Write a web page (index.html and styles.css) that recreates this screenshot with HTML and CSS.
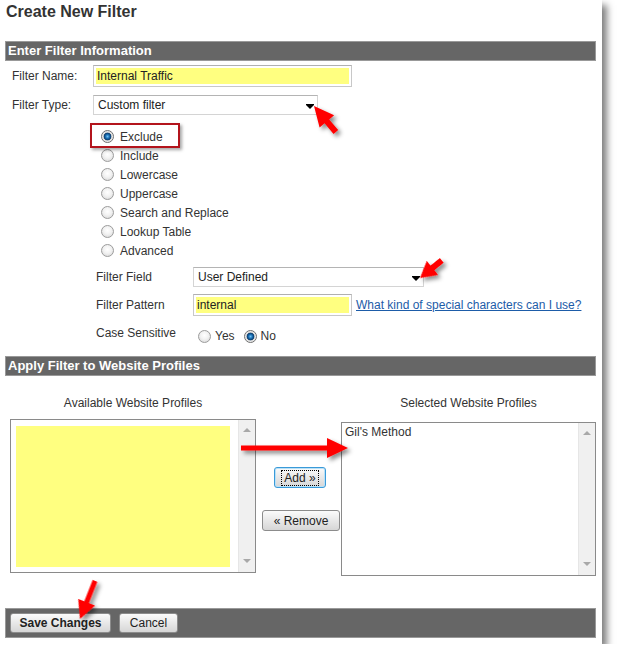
FILE: index.html
```html
<!DOCTYPE html>
<html lang="en">
<head>
    <meta charset="UTF-8">
    <title>Create New Filter</title>
    <link rel="stylesheet" href="styles.css">
</head>
<body>
    <div class="panel">
        <h1 class="page-title">Create New Filter</h1>

        <div class="section-bar">Enter Filter Information</div>
        <div class="form-row form-row--first">
            <label class="form-label" for="filter-name">Filter Name:</label>
            <input id="filter-name" class="text-field text-field--name" value="Internal Traffic">
        </div>
        <div class="form-row">
            <span class="form-label">Filter Type:</span>
            <div class="select-box select-box--type">Custom filter<span class="caret"></span></div>
        </div>

        <ul class="radio-list">
            <li class="radio-item radio-item--marked"><input class="radio" type="radio" name="ftype" checked>Exclude</li>
            <li class="radio-item"><input class="radio" type="radio" name="ftype">Include</li>
            <li class="radio-item"><input class="radio" type="radio" name="ftype">Lowercase</li>
            <li class="radio-item"><input class="radio" type="radio" name="ftype">Uppercase</li>
            <li class="radio-item"><input class="radio" type="radio" name="ftype">Search and Replace</li>
            <li class="radio-item"><input class="radio" type="radio" name="ftype">Lookup Table</li>
            <li class="radio-item"><input class="radio" type="radio" name="ftype">Advanced</li>
        </ul>

        <div class="sub-form">
            <div class="sub-row">
                <span class="sub-label">Filter Field</span>
                <div class="select-box select-box--field">User Defined<span class="caret"></span></div>
            </div>
            <div class="sub-row sub-row--pattern">
                <span class="sub-label">Filter Pattern</span>
                <input class="text-field text-field--pattern" value="internal">
                <a href="#" class="help-link">What kind of special characters can I use?</a>
            </div>
            <div class="sub-row sub-row--case">
                <span class="sub-label">Case Sensitive</span>
                <div class="case-options">
                    <label class="case-option"><input class="radio" type="radio" name="case">Yes</label>
                    <label class="case-option"><input class="radio" type="radio" name="case" checked>No</label>
                </div>
            </div>
        </div>

        <div class="section-bar section-bar--profiles">Apply Filter to Website Profiles</div>
        <div class="profiles">
            <div class="profile-col">
                <div class="col-caption">Available Website Profiles</div>
                <div class="listbox">
                    <div class="list-body"><div class="list-highlight"></div></div>
                    <div class="scrollbar"><span class="sb-up"></span><span class="sb-down"></span></div>
                </div>
            </div>
            <div class="profile-actions">
                <button class="btn btn--focused"><span class="focus-ring">Add &raquo;</span></button>
                <button class="btn btn--remove">&laquo; Remove</button>
            </div>
            <div class="profile-col profile-col--selected">
                <div class="col-caption">Selected Website Profiles</div>
                <div class="listbox">
                    <div class="list-body list-body--items">Gil's Method</div>
                    <div class="scrollbar"><span class="sb-up"></span><span class="sb-down"></span></div>
                </div>
            </div>
        </div>

        <div class="footer-bar">
            <button class="btn btn--save">Save Changes</button>
            <button class="btn btn--cancel">Cancel</button>
        </div>

        <!-- red callout arrows drawn over the form -->
        <svg class="callouts" width="602" height="644" viewBox="0 0 602 644">
            <defs>
                <filter id="arrow-shadow" x="-50%" y="-50%" width="200%" height="200%">
                    <feDropShadow dx="3" dy="3" stdDeviation="2" flood-color="#000" flood-opacity="0.45"/>
                </filter>
            </defs>
            <g fill="#ff0000" filter="url(#arrow-shadow)">
                <path transform="translate(314,106) rotate(-130)" d="M0,0 L-20,-9.5 L-20,-3 L-34,-3 L-34,3 L-20,3 L-20,9.5 Z"/>
                <path transform="translate(420,278) rotate(141)" d="M0,0 L-16,-9 L-16,-3 L-28,-3 L-28,3 L-16,3 L-16,9 Z"/>
                <path transform="translate(348,448)" d="M0,0 L-21,-10 L-21,-2.5 L-107,-2.5 L-107,2.5 L-21,2.5 L-21,10 Z"/>
                <path transform="translate(80,619) rotate(111.5)" d="M0,0 L-18,-9 L-18,-2.5 L-41,-2.5 L-41,2.5 L-18,2.5 L-18,9 Z"/>
            </g>
        </svg>
    </div>
</body>
</html>
```

FILE: styles.css
```css
body {
    margin: 0;
    background-color: #fff;
    font-family: "Liberation Sans", Arial, sans-serif;
    font-size: 12px;
    color: #333;
}
.panel {
    position: relative;
    width: 602px;
    height: 644px;
    box-sizing: border-box;
    padding: 0 6px 0 5px;
    background-color: #fff;
    box-shadow: 5px 5px 7px rgba(0, 0, 0, 0.5);
}
.page-title {
    margin: 0 0 19px;
    padding: 2px 0 0 1px;
    font-size: 16px;
    line-height: 20px;
    font-weight: bold;
    color: #333;
}
.section-bar {
    height: 20px;
    box-sizing: border-box;
    border: 1px solid #999;
    background-color: #666;
    color: #fff;
    font-size: 13px;
    font-weight: bold;
    line-height: 18px;
    padding-left: 2px;
}
.form-row {
    display: flex;
    align-items: center;
    margin-top: 8px;
    padding-left: 7px;
}
.form-row--first {
    margin-top: 4px;
}
.form-label {
    width: 81px;
    flex: none;
}
.text-field {
    height: 22px;
    box-sizing: border-box;
    border: 1px solid #c8c8c8;
    border-top-color: #b0b0b0;
    padding: 0 3px;
    margin: 0;
    background-color: #ffff80;
    box-shadow: inset 0 0 0 2px #fff;
    font-family: inherit;
    font-size: 12px;
    color: #222;
    outline: none;
}
.text-field--name {
    width: 259px;
}
.text-field--pattern {
    width: 159px;
}
.select-box {
    display: flex;
    align-items: center;
    justify-content: space-between;
    height: 20px;
    box-sizing: border-box;
    border: 1px solid #d4d4d4;
    border-top-color: #b4b4b4;
    padding: 0 3px 0 4px;
    background-color: #fff;
    color: #222;
}
.select-box--type {
    width: 225px;
}
.select-box--field {
    width: 231px;
}
.caret {
    width: 0;
    height: 0;
    border-left: 4px solid transparent;
    border-right: 4px solid transparent;
    border-top: 4px solid #000;
    margin-top: 3px;
    box-shadow: 0 -1px 0 0 #000;
}
.radio-list {
    list-style: none;
    margin: 12px 0 0 96px;
    padding: 0;
}
.radio-item {
    display: flex;
    align-items: center;
    gap: 6px;
    height: 19px;
}
.radio-item--marked {
    position: relative;
}
.radio-item--marked::before {
    content: "";
    position: absolute;
    left: -11px;
    top: -4px;
    width: 90px;
    height: 25px;
    box-sizing: border-box;
    border: 2px solid #b3141c;
    box-shadow: 2px 2px 3px rgba(0, 0, 0, 0.35);
}
.radio {
    appearance: none;
    -webkit-appearance: none;
    width: 13px;
    height: 13px;
    margin: 0;
    flex: none;
    box-sizing: border-box;
    border: 1px solid #9c9c9c;
    border-radius: 50%;
    background: radial-gradient(circle at 50% 40%, #fff 0, #f2f2f2 45%, #d2d2d2 100%);
}
.radio:checked {
    border-color: #6f6f6f;
    background: radial-gradient(circle, #6cc0f5 0, #1a6db0 2px, #0b3c6c 3.5px, #d8d8d8 4.2px, #fbfbfb 6px);
}
.sub-form {
    margin: 7px 0 0 91px;
}
.sub-row {
    display: flex;
    align-items: center;
    margin-top: 7px;
}
.sub-row:first-child {
    margin-top: 0;
}
.sub-label {
    width: 97px;
    flex: none;
}
.help-link {
    margin-left: 4px;
    color: #1d5ca8;
    text-decoration: underline;
}
.sub-row--case {
    align-items: flex-start;
    height: 18px;
    margin-top: 10px;
}
.sub-row--case .sub-label {
    line-height: 14px;
}
.case-options {
    display: flex;
    align-items: center;
    height: 18px;
    margin-left: 5px;
    padding-top: 1px;
}
.case-option {
    display: flex;
    align-items: center;
    gap: 4px;
    margin-right: 9px;
}
.section-bar--profiles {
    margin-top: 12px;
}
.profiles {
    display: grid;
    grid-template-columns: 246px 85px 255px;
    margin: 20px 0 0 5px;
}
.col-caption {
    text-align: center;
    line-height: 14px;
    margin-bottom: 9px;
}
.profile-col--selected .col-caption {
    margin-bottom: 12px;
}
.listbox {
    display: flex;
    height: 154px;
    box-sizing: border-box;
    border: 1px solid #8a8a8a;
    background-color: #fff;
}
.list-body {
    flex: 1;
    display: flex;
    padding: 6px 8px 5px 5px;
}
.list-highlight {
    flex: 1;
    background-color: #ffff80;
}
.list-body--items {
    display: block;
    padding: 2px 3px;
    color: #333;
    line-height: 15px;
}
.scrollbar {
    width: 16px;
    flex: none;
    display: flex;
    flex-direction: column;
    align-items: center;
    justify-content: space-between;
    padding: 8px 0 9px;
    background-color: #f0f0f0;
    border-left: 1px solid #e6e6e6;
}
.sb-up,
.sb-down {
    width: 0;
    height: 0;
    border-left: 4px solid transparent;
    border-right: 4px solid transparent;
}
.sb-up {
    border-bottom: 4px solid #a8a8a8;
}
.sb-down {
    border-top: 4px solid #a8a8a8;
}
.profile-actions {
    display: flex;
    flex-direction: column;
    align-items: center;
    gap: 22px;
    padding-top: 71px;
}
.btn {
    height: 20px;
    box-sizing: border-box;
    border: 1px solid #8c8c8c;
    border-radius: 3px;
    padding: 0 10px;
    margin: 0;
    background: linear-gradient(#fbfbfb, #e8e8e8 50%, #d6d6d6);
    font-family: inherit;
    font-size: 12px;
    color: #222;
    cursor: pointer;
}
.btn--focused {
    height: 21px;
    width: 52px;
    padding: 0 6px;
    border-color: #3a9ad8;
    box-shadow: inset 0 0 0 1px #b9e1f8;
    margin-left: 3px;
}
.focus-ring {
    display: block;
    border: 1px dotted #000;
    line-height: 14px;
}
.btn--remove {
    height: 21px;
    width: 78px;
    padding: 0;
    margin-left: 5px;
}
.footer-bar {
    display: flex;
    gap: 8px;
    height: 30px;
    box-sizing: border-box;
    margin-top: 32px;
    padding: 4px;
    border: 1px solid #999;
    background-color: #666;
}
.btn--save {
    width: 101px;
    padding: 0;
    font-weight: bold;
}
.btn--cancel {
    width: 59px;
    padding: 0;
}
.callouts {
    position: absolute;
    left: 0;
    top: 0;
    pointer-events: none;
    overflow: visible;
}
```
